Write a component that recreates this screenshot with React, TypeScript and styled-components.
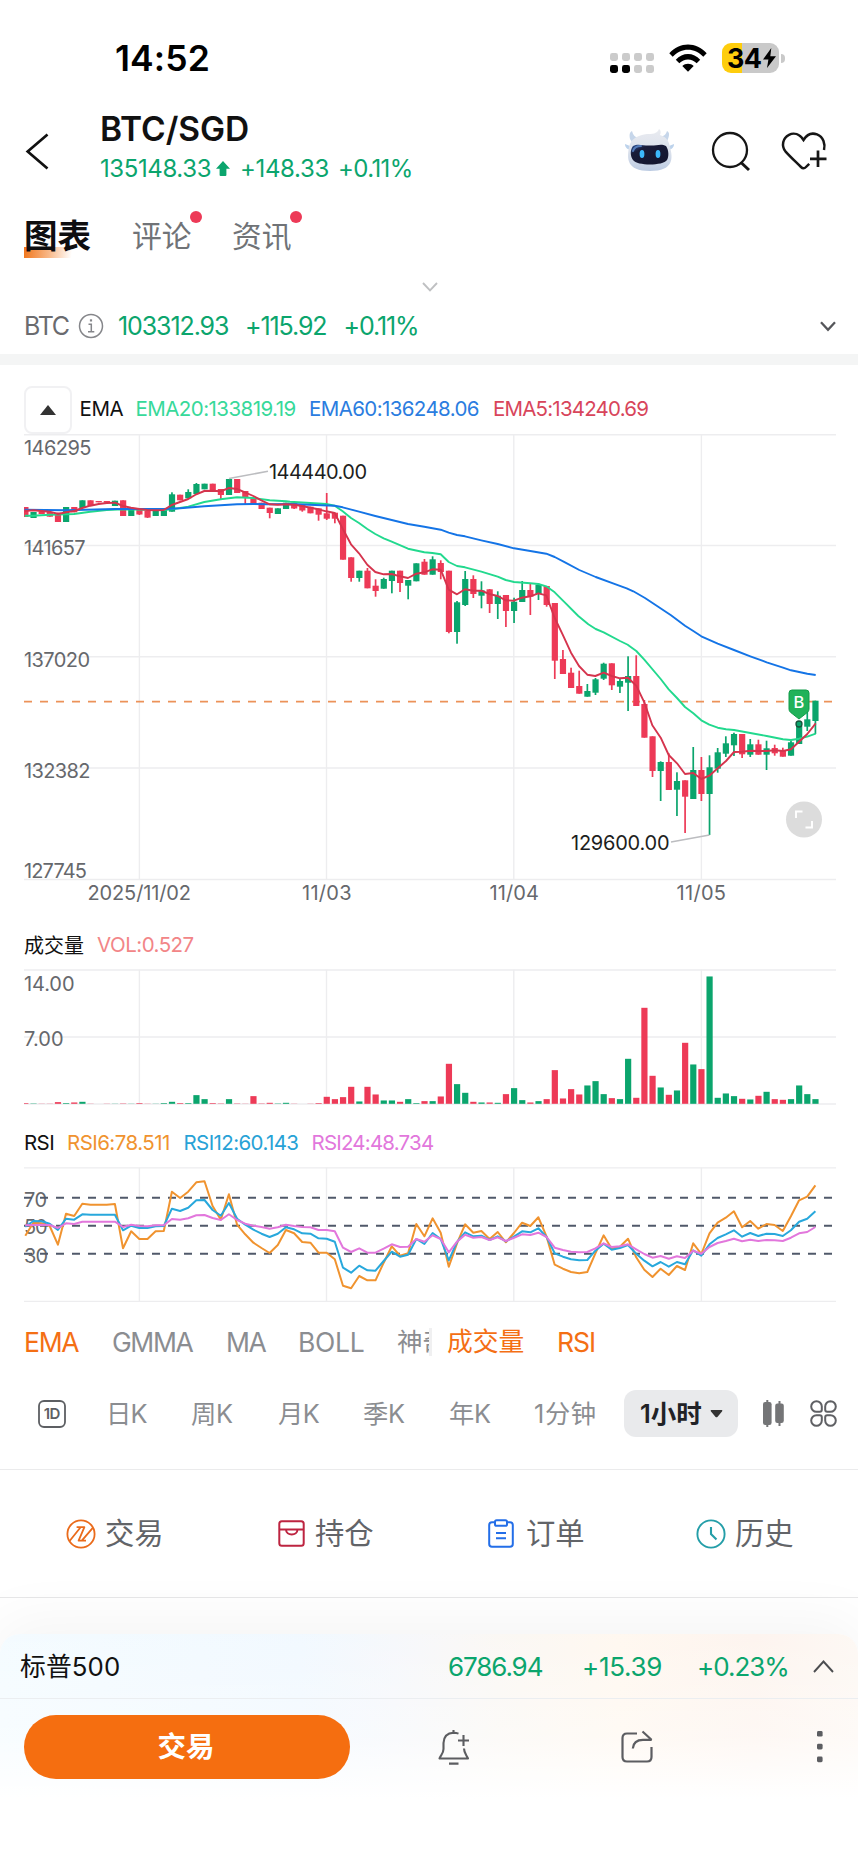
import React from "react";
import styled, { createGlobalStyle, css } from "styled-components";

const GREEN = "#0ba56d";
const RED = "#ed3a57";
const ORANGE = "#f46f14";
const GRID = "#ededef";

const GlobalStyle = createGlobalStyle`
  * { box-sizing: border-box; }
  body {
    margin: 0;
    background: #fff;
    font-family: Inter, "Noto Sans CJK SC", sans-serif;
    font-feature-settings: "calt" 0;
  }
`;

const Screen = styled.main`
  width: 858px;
  height: 1863px;
  display: flex;
  flex-direction: column;
  overflow: hidden;
  background: #fff;
  color: #111;
`;

type LabelProps = {
  $size: number;
  $color?: string;
  $weight?: number;
  $track?: number;
  $width?: number;
  $gap?: number;
};

const Label = styled.span<LabelProps>`
  flex: none;
  display: block;
  line-height: 1;
  white-space: nowrap;
  font-size: ${(p) => p.$size}px;
  color: ${(p) => p.$color ?? "#111"};
  font-weight: ${(p) => p.$weight ?? 400};
  letter-spacing: ${(p) => p.$track ?? 0}px;
  margin-left: ${(p) => p.$gap ?? 0}px;
  ${(p) => p.$width && css`width: ${p.$width}px;`}
`;

const Drawing = styled.svg<{ $gap?: number; $drop?: number }>`
  flex: none;
  display: block;
  overflow: visible;
  margin-left: ${(p) => p.$gap ?? 0}px;
  margin-top: ${(p) => p.$drop ?? 0}px;
`;

/* ---------- Status bar ---------- */

const StatusBar = styled.header`
  height: 100px;
  padding: 18px 0 0 115px;
  display: flex;
  align-items: center;
  flex: none;
`;

const Battery = styled.div`
  width: 57px;
  height: 30px;
  margin: -2px 0 0 15px;
  border-radius: 9px;
  display: flex;
  align-items: center;
  padding-left: 5px;
  background: linear-gradient(90deg, #fecd0d 20px, #c9c9c9 20px);
`;

const BatteryCap = styled.div`
  width: 4px;
  height: 9px;
  margin: -2px 0 0 2px;
  border-radius: 0 4px 4px 0;
  background: #c9c9c9;
`;

function Status() {
  return (
    <StatusBar>
      <Label $size={35.5} $weight={600} $color="#000" $width={495} $track={0.1}>14:52</Label>
      <Drawing $drop={7} width="44" height="20" viewBox="0 0 44 20">
        {[0, 12, 24, 36].map((x, i) => (
          <g key={x}>
            <rect x={x} y="0" width="8" height="8" rx="2.4" fill="#cbcbcb" />
            <rect x={x} y="12" width="8" height="8" rx="2.4" fill={i < 2 ? "#000" : "#cbcbcb"} />
          </g>
        ))}
      </Drawing>
      <Drawing $gap={15} $drop={-3} width="38" height="28" viewBox="0 0 38 28" fill="#000">
        <path d="M0.3 9.3C10.5-2.3 27.5-2.3 37.7 9.3L34.3 12.8C25.8 3.4 12.2 3.4 3.7 12.8Z" />
        <path d="M6.8 15.8C13.5 8.2 24.5 8.2 31.2 15.8L27.7 19.3C22.8 14.1 15.2 14.1 10.3 19.3Z" />
        <path d="M13.3 22.1C16.4 18.9 21.6 18.9 24.7 22.1L19 27.8Z" />
      </Drawing>
      <Battery>
        <Label $size={27} $weight={700} $color="#000" $track={-0.6}>34</Label>
        <Drawing width="15" height="22" viewBox="0 0 15 22" fill="#000">
          <path d="M9.3 1L1 12.4H6.4L5 21L14 9.2H8.3Z" />
        </Drawing>
      </Battery>
      <BatteryCap />
    </StatusBar>
  );
}

/* ---------- Title ---------- */

const TitleBar = styled.section`
  height: 96px;
  padding-left: 24px;
  display: flex;
  align-items: center;
  flex: none;
`;

const Quote = styled.div`
  width: 525px;
  margin-left: 50px;
  display: flex;
  flex-direction: column;
  gap: 10px;
  padding-bottom: 2px;
`;

const Line = styled.div`
  display: flex;
  align-items: center;
`;

function Robot() {
  return (
    <Drawing $drop={5} width="50" height="44" viewBox="0 0 50 44">
      <defs>
        <linearGradient id="shell" x1="0" y1="0" x2="0" y2="1">
          <stop offset="0" stopColor="#e9ebf0" />
          <stop offset="0.55" stopColor="#dbe1ec" />
          <stop offset="1" stopColor="#bccbe2" />
        </linearGradient>
        <linearGradient id="visor" x1="0" y1="0" x2="1" y2="1">
          <stop offset="0" stopColor="#315ba4" />
          <stop offset="0.25" stopColor="#191c39" />
          <stop offset="1" stopColor="#12152d" />
        </linearGradient>
      </defs>
      <path d="M5 10C4 5 5 3 7 2C8 6 10 8 13 9L8 15Z" fill="#c6d6ea" />
      <path d="M43 10C45 5 44 3 42 2C41 6 38 7 36 8L41 15Z" fill="#c6d6ea" />
      <path d="M5 17L0 15C0 19 3 21 6 20ZM44 17L49 15C49 19 46 21 43 20Z" fill="#bdd3ec" />
      <path d="M4 18C6 9 14 6 22 5C27 5 32 5 34 0C36 1 36 4 35 6C42 8 44 13 45 18C48 29 49 42 25 42C1 42 2 29 4 18Z" fill="url(#shell)" />
      <path d="M8 17C13 14 19 17 25 16.5C31 17 36 14 41 17C44 21 44 28 42 31C38 37 12 37 8 31C5 27 5 21 8 17Z" fill="url(#visor)" />
      <path d="M8 22C9 18.5 12 17 16 17" fill="none" stroke="#557dbb" strokeWidth="2" strokeLinecap="round" />
      <ellipse cx="17" cy="25" rx="2.4" ry="4" fill="#3cb9fb" />
      <ellipse cx="33" cy="25" rx="2.4" ry="4" fill="#3cb9fb" />
    </Drawing>
  );
}

function Title() {
  return (
    <TitleBar>
      <Drawing $drop={5} width="26" height="38" viewBox="0 0 26 38" fill="none" stroke="#111" strokeWidth="2.7">
        <path d="M23.5 2.5L3.7 19.5L23.5 36.5" />
      </Drawing>
      <Quote>
        <Label $size={33.5} $weight={600} $track={-0.1}>BTC/SGD</Label>
        <Line>
          <Label $size={24} $color={GREEN} $track={-0.4} $width={116}>135148.33</Label>
          <Drawing width="14" height="15" viewBox="0 0 14 15" fill={GREEN}>
            <path d="M7 0L14 7.8H10.4V14Q10.4 15 9.4 15H4.6Q3.6 15 3.6 14V7.8H0Z" />
          </Drawing>
          <Label $size={24} $color={GREEN} $track={-0.35} $gap={10} $width={98}>+148.33</Label>
          <Label $size={24} $color={GREEN} $track={-0.6}>+0.11%</Label>
        </Line>
      </Quote>
      <Robot />
      <Drawing $gap={36} $drop={6} width="40" height="40" viewBox="0 0 40 40" fill="none" stroke="#161616" strokeWidth="2.3">
        <circle cx="19" cy="19" r="17" />
        <path d="M30 31.5L38 39" strokeWidth="3" />
      </Drawing>
      <Drawing $gap={30} $drop={6} width="46" height="40" viewBox="0 0 46 40" fill="none" stroke="#161616" strokeWidth="2.5">
        <path d="M43 19C44.5 13 42.5 6 36 3.4C31 1.6 26 3.2 22.5 9C18.5 3 13 1.4 8 3.8C1.5 7 .3 15.2 4.4 20.3C9 25.5 14.5 30.5 20 36Q22.5 38.6 25 36L28.2 32.8" />
        <path d="M37 19.5V36M29 27.8H45.5" strokeWidth="2.7" />
      </Drawing>
    </TitleBar>
  );
}

/* ---------- Page tabs ---------- */

const PageTabs = styled.nav`
  height: 74px;
  padding: 6px 0 0 24px;
  display: flex;
  align-items: center;
  flex: none;
`;

const PageTab = styled.div<{ $width: number; $active?: boolean }>`
  position: relative;
  width: ${(p) => p.$width}px;
  margin-right: 41px;
  font-size: ${(p) => (p.$active ? 33.5 : 29.8)}px;
  font-weight: ${(p) => (p.$active ? 700 : 400)};
  color: ${(p) => (p.$active ? "#0e0e10" : "#707377")};
  line-height: 44px;
  white-space: nowrap;
  ${(p) =>
    p.$active &&
    css`
      background: linear-gradient(95deg, #f0761c 0%, #f8b888 45%, #fff 85%) 0 33px / 56px 11px no-repeat;
    `}
`;

const Dot = styled.i`
  position: absolute;
  right: -11px;
  top: -3px;
  width: 12px;
  height: 12px;
  border-radius: 50%;
  background: ${RED};
`;

const Handle = styled.div`
  height: 28px;
  padding: 6px 0 0 1px;
  display: flex;
  justify-content: center;
  align-items: center;
  flex: none;
`;

const Underlying = styled.section`
  height: 67px;
  padding: 0 22px 0 24px;
  border-bottom: 11px solid #f4f5f5;
  display: flex;
  align-items: center;
  flex: none;
`;

const Push = styled.div`
  flex: 1;
`;

/* ---------- Charts ---------- */

const Legend = styled.div<{ $height: number; $top: number }>`
  height: ${(p) => p.$height}px;
  padding: ${(p) => p.$top}px 0 0 24px;
  display: flex;
  align-items: center;
  flex: none;
`;

const Collapse = styled.button`
  width: 48px;
  height: 48px;
  padding: 0;
  border: 2px solid #f1f1f3;
  border-radius: 8px;
  background: #fff;
  display: grid;
  place-items: center;
`;

const Plot = styled.svg`
  display: block;
  flex: none;
  font-family: Inter, sans-serif;
  font-size: 20px;
`;

const STEP = 8.145;
const barX = (i: number) => 25.3 + i * STEP;

type Candle = [up: 0 | 1, high: number, top: number, bottom: number, low: number];

const candles: Candle[] = [
  [0, 507, 507, 517, 517], [1, 512, 512, 518, 518], [0, 511.3, 511.3, 514, 514], [0, 512, 512, 516.7, 516.7],
  [0, 512.7, 512.7, 522, 522], [1, 507, 507, 522, 522], [0, 507, 507, 512.3, 512.3], [1, 500.3, 500.3, 508, 508],
  [0, 500.3, 500.3, 506, 506], [0, 501, 501, 502.3, 502.3], [0, 501, 501, 502.7, 502.7], [1, 500.7, 500.7, 506, 506],
  [0, 500.3, 500.3, 516, 516], [1, 509, 509, 516, 516], [0, 509, 509, 514.5, 515], [0, 511, 511, 517.6, 518],
  [1, 511, 511, 516, 516], [1, 510, 510, 516, 516], [1, 492.3, 494.3, 511.7, 511.7], [0, 494.7, 494.7, 500.3, 500.3],
  [1, 489.3, 492, 498.3, 498.3], [1, 483, 484, 494, 494], [1, 483.7, 483.7, 489.3, 489.3], [0, 483.7, 483.7, 491.3, 491.3],
  [0, 489, 489, 495, 499], [1, 479, 479, 495, 495], [0, 479, 479, 493, 493], [0, 491, 491, 497.7, 504],
  [0, 498.3, 498.3, 504, 504], [0, 502.7, 502.7, 509, 509], [0, 507.7, 507.7, 513, 518.3], [1, 508.3, 508.3, 514, 514],
  [1, 502.7, 502.7, 509, 509], [0, 502.7, 502.7, 508.5, 509], [0, 504.7, 504.7, 510.5, 511.7], [0, 506.7, 506.7, 513.3, 513.3],
  [0, 508.3, 508.3, 514.7, 520.7], [0, 493, 513.3, 518.7, 520], [0, 512.7, 512.7, 518.7, 523.3], [0, 515.7, 515.7, 559.7, 559.7],
  [0, 557.3, 557.3, 578, 581.7], [1, 570.7, 570.7, 578, 581.7], [0, 568, 570.7, 588.3, 588.3], [0, 579.3, 585.7, 591, 596.7],
  [1, 577.7, 579, 588.7, 588.7], [1, 570.7, 570.7, 581, 593.3], [0, 570.7, 570.7, 583, 592], [1, 580, 580, 585.7, 599.3],
  [1, 563.3, 563.3, 581.3, 581.3], [0, 559, 561.7, 574.7, 574.7], [1, 556.3, 559.3, 574.7, 574.7], [0, 560.3, 563, 572, 579.3],
  [0, 570.7, 570.7, 632, 633.3], [1, 601, 602.3, 632, 643.7], [1, 571, 579, 605, 606], [0, 575.3, 579, 594, 598],
  [1, 581.3, 590.3, 595.7, 608.3], [0, 589, 589.3, 604, 613], [1, 591.3, 595.7, 604, 619], [0, 595, 595, 611, 627],
  [1, 597.7, 601.7, 611, 623], [1, 581, 590, 602, 602], [0, 584, 590, 596.7, 615], [1, 583.3, 584.7, 594, 600],
  [0, 586, 586, 605, 606.7], [0, 603, 603, 660.7, 679], [0, 650, 659, 674, 674], [0, 667.7, 672.7, 688, 688],
  [0, 670.7, 686, 693.7, 693.7], [1, 684, 691, 696.7, 696.7], [1, 678, 679.3, 692.7, 695], [1, 662.7, 663.7, 678.7, 680],
  [0, 663.3, 663.3, 685.3, 690], [1, 678.3, 681, 686.7, 693], [1, 656.3, 676, 682.7, 711], [0, 655.3, 676, 706, 706],
  [0, 700, 704, 737.7, 737.7], [0, 736.3, 736.3, 771, 777], [1, 761.3, 762, 771, 801], [0, 753.3, 762, 790, 790],
  [1, 772.3, 781, 789.7, 816], [0, 780.3, 780.3, 796.7, 833], [1, 747, 770, 799, 799], [0, 757, 770, 794, 801],
  [1, 755.3, 767.3, 794, 835], [1, 748, 752.3, 768.7, 772.7], [1, 736.3, 743.3, 753.7, 757], [1, 732.7, 734, 745.3, 756],
  [0, 734, 734, 754.3, 758], [1, 739, 744.3, 754.7, 757], [0, 739.7, 744.3, 754.7, 754.7], [1, 740.7, 748.3, 754.7, 770],
  [0, 744.7, 748, 753.3, 755.7], [0, 747.7, 751, 756.7, 756.7], [1, 741, 742.3, 755.7, 755.7], [1, 726, 726, 744, 744],
  [1, 710, 719.3, 726.7, 731], [1, 700.7, 700.7, 721, 734],
];

/* Each segment is an origin followed by points in thirds of a pixel. */
type Segment = [ox: number, oy: number, pts: string];

const trace = (segments: Segment[]) =>
  segments
    .flatMap(([ox, oy, pts]) =>
      pts.split(" ").map((pair) => {
        const [x, y] = pair.split(",").map(Number);
        return `${(ox + x / 3).toFixed(1)},${(oy + y / 3).toFixed(1)}`;
      })
    )
    .join(" ");

const ema5 = trace([
  [0, 430, "74,243 100,241 149,245 174,252 198,247 222,243 247,234 271,227 296,222 320,219 345,218 369,228 393,233 418,237 442,240 467,241 491,240 515,225 540,216 565,207 589,193 613,183 638,182 662,184 687,174 711,177 735,187 760,198 784,211 809,223 833,224 858,223"],
  [290, 500, "12,14 37,18 61,23 85,28 109,34 134,39 158,86 183,133 207,160 232,194 256,216 281,223 305,222 330,229 354,234 379,221 403,217 427,208 452,209 476,269 501,283 525,268 550,272 574,272 598,282 623,288 647,301 672,302 696,293 721,289 745,280 769,286 794,354 818,404 843,458 867,498"],
  [560, 630, "82,134 106,138 131,128 155,138 180,145 204,143 229,167 253,217 277,286 302,323 326,375 351,400 375,432 400,429 424,447 448,437 473,415 498,393 522,366 546,365 571,362 595,363 620,363 644,361 669,363 693,358 717,335 742,312 767,280"],
]);

const ema20 = trace([
  [0, 430, "74,257 100,257 149,254 222,252 271,245 320,240 369,238 491,240 515,238 565,230 613,216 662,208 711,202 760,204 809,211 858,214"],
  [290, 500, "0,5 61,9 109,12 134,17 158,34 183,54 207,69 232,87 256,102 281,115 305,125 354,146 403,157 427,159 452,163 476,186 501,198 525,202 574,215 623,230 647,240 672,246 721,250 745,252 769,259 794,277 818,301"],
  [565, 540, "0,188 40,228 70,253 92,267 116,277 165,303 190,315"],
  [560, 630, "204,45 229,63 253,89 302,147 326,178 351,204 375,231 400,250 424,271 448,284 473,293 498,298 522,300 571,309 620,318 669,328 693,330 717,326 742,320 767,311"],
]);

const ema60 = trace([
  [0, 430, "74,239 198,241 345,237 491,237 540,235 613,229 711,223 760,222 800,223"],
  [290, 500, "0,12 134,17 158,22 207,35 256,48 305,60 354,72 403,80 452,89 476,98 501,105 525,109 574,121 623,132 672,145 721,153 769,161 794,171"],
  [565, 540, "0,67 43,90 92,111 146,131 185,145 205,154 240,174 275,197 318,226 360,257 385,273"],
  [560, 630, "424,19 473,41 522,60 571,79 620,97 669,113 693,121 742,131 767,135"],
]);

const volumes = [
  2, 1, 0.5, 0.5, 5, 2, 4, 6, 0.5, 0, 0.5, 0.5, 1, 0.5, 2, 0.5, 0.5, 2, 6, 2, 2, 26, 14, 2, 1, 14, 1, 0.5, 23, 1, 3, 1, 3, 0.5, 0, 0.5, 2,
  21, 14, 20, 51, 7, 51, 28, 10, 10, 6, 14, 2, 8, 8, 22, 120, 59, 33, 6, 4, 4, 3, 29, 47, 11, 4, 8, 14, 101, 16, 44, 28,
  55, 68, 29, 17, 14, 135, 18, 288, 84, 49, 27, 40, 183, 118, 104, 382, 18, 31, 23, 15, 13, 24, 36, 14, 12, 14, 55, 29, 14,
];

const rsi6 = [
  947, 908, 910, 918, 974, 881, 888, 851, 854, 854, 854, 852, 985, 934, 957, 957, 934, 933, 815, 834, 815, 787, 784, 858, 899,
  823, 914, 943, 968, 984, 999, 975, 930, 940, 966, 968, 998, 998, 1018, 1097, 1105, 1068, 1081, 1081, 1028, 979, 1007, 1000,
  912, 949, 895, 938, 1040, 970, 913, 938, 933, 957, 936, 967, 939, 908, 918, 892, 950, 1034, 1046, 1056, 1060, 1056, 1000,
  946, 986, 980, 956, 1012, 1049, 1071, 1046, 1065, 1038, 1050, 970, 1002, 940, 908, 893, 874, 922, 903, 926, 912, 915, 933,
  889, 841, 830, 796,
];
const rsi12 = [
  920, 903, 904, 911, 930, 896, 899, 883, 884, 884, 884, 884, 931, 917, 924, 924, 919, 918, 866, 873, 863, 841, 840, 870, 887,
  849, 896, 914, 929, 941, 951, 941, 922, 928, 940, 941, 955, 956, 965, 1043, 1058, 1037, 1051, 1052, 1023, 995, 1010, 1004,
  957, 972, 939, 957, 1021, 966, 937, 949, 947, 960, 949, 964, 950, 934, 937, 925, 951, 1000, 1010, 1018, 1021, 1020, 992,
  971, 989, 984, 975, 1001, 1022, 1039, 1026, 1040, 1026, 1033, 991, 1007, 973, 954, 943, 931, 950, 939, 948, 941, 942, 948,
  931, 905, 896, 874,
];
const rsi24 = [
  916, 915, 914, 915, 924, 910, 912, 905, 905, 905, 905, 905, 921, 914, 918, 919, 916, 916, 897, 899, 895, 886, 885, 894, 900,
  883, 900, 911, 917, 921, 926, 922, 914, 918, 921, 922, 930, 930, 934, 983, 996, 985, 998, 998, 986, 973, 981, 980, 957, 965,
  946, 957, 997, 965, 944, 953, 951, 960, 952, 963, 953, 943, 945, 938, 951, 983, 990, 995, 997, 996, 985, 970, 981, 979, 973,
  988, 1002, 1013, 1008, 1016, 1009, 1014, 992, 1001, 981, 969, 963, 956, 964, 959, 963, 960, 961, 963, 953, 940, 936, 921,
];
const rsiLine = (values: number[]) => values.map((v, i) => `${barX(i).toFixed(1)},${(920 + v / 3).toFixed(1)}`).join(" ");

function Grid({ rows, top, bottom }: { rows: number[]; top: number; bottom: number }) {
  return (
    <g stroke={GRID} strokeWidth="1.4">
      {rows.map((y) => <path key={y} d={`M24 ${y}H836`} />)}
      {[139.4, 326.5, 513.8, 701.4].map((x) => <path key={x} d={`M${x} ${top}V${bottom}`} />)}
    </g>
  );
}

type Tick = [text: string, x: number, baseline: number, length: number];

function Ticks({ items, color = "#66686c" }: { items: Tick[]; color?: string }) {
  return (
    <g fill={color}>
      {items.map(([text, x, y, length]) => (
        <text key={text} x={x} y={y} textLength={length}>{text}</text>
      ))}
    </g>
  );
}

function PriceChart() {
  return (
    <Plot width="858" height="476" viewBox="0 434 858 476">
      <defs>
        <clipPath id="area"><rect x="24" y="434" width="812" height="450" /></clipPath>
      </defs>
      <Grid rows={[434.7, 545.5, 656.7, 768, 879.5]} top={434} bottom={880} />
      <Ticks
        items={[
          ["146295", 24, 455, 67.5], ["141657", 24, 555.3, 61.5], ["137020", 24, 667, 66], ["132382", 24, 778, 66.5], ["127745", 24, 878.3, 63],
          ["2025/11/02", 87.5, 900.2, 103.5], ["11/03", 302, 900.2, 49.5], ["11/04", 489.5, 900.2, 49.5], ["11/05", 676.5, 900.2, 49.5],
        ]}
      />
      <path d="M24 701.7H836" stroke="#ec9259" strokeWidth="1.8" strokeDasharray="8 8" />
      <g clipPath="url(#area)">
        {candles.map(([up, high, top, bottom, low], i) => (
          <g key={i} fill={up ? GREEN : RED}>
            <rect x={barX(i) - 3} y={top} width="6.2" height={bottom - top} />
            <rect x={barX(i) - 0.8} y={high} width="1.7" height={low - high} />
          </g>
        ))}
        <g fill="none" strokeWidth="1.9" strokeLinejoin="round">
          <polyline points={ema20} stroke="#22d98e" />
          <polyline points={ema60} stroke="#1474e6" />
          <polyline points={ema5} stroke="#d5344d" />
        </g>
      </g>
      <path d="M229 478.5L268 471.3M671 842L709.5 835" stroke="#bcbdc0" strokeWidth="1.6" />
      <Ticks color="#1d1e21" items={[["144440.00", 269, 479.3, 98], ["129600.00", 571, 850, 98.5]]} />
      <circle cx="799" cy="724" r="3" fill={GREEN} stroke="#14543a" strokeWidth="1.3" />
      <path d="M792 690H806Q809 690 809 693V709Q809 711 807.5 712.3L799 719L790.5 712.3Q789 711 789 709V693Q789 690 792 690Z" fill="#21b25a" stroke="#119c48" strokeWidth="1" />
      <text x="799" y="708" fontSize="16.5" fontWeight="500" fill="#fff" textAnchor="middle">B</text>
      <circle cx="804" cy="819.5" r="18" fill="#dcdcdc" />
      <path d="M796 818V811.5H802.5M805.5 827.5H812V821" fill="none" stroke="#fff" strokeWidth="1.9" />
    </Plot>
  );
}

function VolumeChart() {
  return (
    <Plot width="858" height="137" viewBox="0 969 858 137">
      <Grid rows={[970, 1037, 1104]} top={969.7} bottom={1104} />
      <Ticks items={[["14.00", 24, 991, 50.5], ["7.00", 24, 1046, 39.5]]} />
      {volumes.map((v, i) => (
        <rect key={i} x={Math.max(24, barX(i) - 3)} y={1103.8 - v / 3} width={i ? 6.2 : 4.4} height={v / 3} fill={candles[i][0] ? GREEN : RED} />
      ))}
    </Plot>
  );
}

function RsiChart() {
  return (
    <Plot width="858" height="136" viewBox="0 1167 858 136">
      <Grid rows={[1167.9, 1301.4]} top={1167.7} bottom={1301} />
      <Ticks items={[["70", 24, 1206.7, 23], ["50", 24, 1234, 23.5], ["30", 24, 1262.5, 24]]} />
      <path d="M24 1197.7H836M24 1225.7H836M24 1253.7H836" stroke="#50596a" strokeWidth="1.9" strokeDasharray="8 8" />
      <g fill="none" strokeWidth="2" strokeLinejoin="round">
        <polyline points={rsiLine(rsi6)} stroke="#f0932f" />
        <polyline points={rsiLine(rsi12)} stroke="#28a8dc" />
        <polyline points={rsiLine(rsi24)} stroke="#e277dc" />
      </g>
    </Plot>
  );
}

/* ---------- Indicator and period pickers ---------- */

const Indicators = styled.nav`
  height: 69px;
  padding: 9px 0 0 24px;
  display: flex;
  align-items: center;
  flex: none;
`;

const Clipped = styled.div`
  width: 35px;
  height: 28px;
  margin-left: 32px;
  overflow: hidden;
  display: flex;
  align-items: center;
  border-right: 3px solid #f0f0f1;
`;

const Periods = styled.nav`
  height: 98px;
  padding: 0 0 14px 38px;
  border-bottom: 1px solid #ebebec;
  display: flex;
  align-items: center;
  flex: none;
`;

const ActivePeriod = styled.div`
  width: 114px;
  height: 47px;
  margin-left: 24px;
  padding-left: 16px;
  border-radius: 12px;
  background: #e9eaec;
  display: flex;
  align-items: center;
`;

const GREY = "#8b8d91";

function Pickers() {
  return (
    <>
      <Indicators>
        <Label $size={26.5} $color={ORANGE} $track={-1.3} $width={88}>EMA</Label>
        <Label $size={26.5} $color={GREY} $track={-1.4} $width={114}>GMMA</Label>
        <Label $size={26.5} $color={GREY} $track={-1.5} $width={72}>MA</Label>
        <Label $size={26.5} $color={GREY} $track={-0.3} $width={67}>BOLL</Label>
        <Clipped><Label $size={25.5} $color={GREY}>神奇</Label></Clipped>
        <Label $size={25.8} $color={ORANGE} $gap={15} $width={110}>成交量</Label>
        <Label $size={26.5} $color={ORANGE} $track={-1}>RSI</Label>
      </Indicators>
      <Periods>
        <Drawing width="28" height="28" viewBox="0 0 28 28">
          <rect x="1" y="1" width="26" height="26" rx="5" fill="none" stroke="#5d5f63" strokeWidth="1.8" />
          <text x="14" y="19.2" fontFamily="Inter" fontSize="15" fontWeight="600" fill="#5d5f63" textAnchor="middle" textLength="16.5">1D</text>
        </Drawing>
        <Label $size={25.3} $color={GREY} $gap={40} $width={85} $track={-0.8}>日K</Label>
        <Label $size={25.3} $color={GREY} $width={87} $track={-0.4}>周K</Label>
        <Label $size={25.3} $color={GREY} $width={85} $track={-0.6}>月K</Label>
        <Label $size={25.3} $color={GREY} $width={86} $track={-0.4}>季K</Label>
        <Label $size={25.3} $color={GREY} $width={85} $track={-0.4}>年K</Label>
        <Label $size={25.3} $color={GREY} $width={66} $track={0.6}>1分钟</Label>
        <ActivePeriod>
          <Label $size={25.5} $weight={600} $color="#212226" $width={70} $track={0}>1小时</Label>
          <Drawing width="13" height="8" viewBox="0 0 13 8" fill="#333">
            <path d="M1 0H12Q12.8 .6 12 1.5L7.4 6.9Q6.5 7.8 5.6 6.9L1 1.5Q.2 .6 1 0Z" />
          </Drawing>
        </ActivePeriod>
        <Drawing $gap={25} width="21" height="27" viewBox="0 0 21 27" fill="#747577">
          <rect x="0" y="2" width="8.6" height="23" rx="2.2" />
          <rect x="3.3" y="0" width="2" height="27" />
          <rect x="12.2" y="3.5" width="8.6" height="19.5" rx="2.2" />
          <rect x="15.5" y="1" width="2" height="25" />
        </Drawing>
        <Drawing $gap={26} width="27" height="27" viewBox="0 0 27 27" fill="none" stroke="#5f6064" strokeWidth="2">
          <path d="M6.5 1.2A5.3 5.3 0 0 1 11.8 6.5V9.8Q11.8 11.8 9.8 11.8H6.5A5.3 5.3 0 0 1 6.5 1.2ZM20.5 1.2A5.3 5.3 0 0 1 20.5 11.8H17.2Q15.2 11.8 15.2 9.8V6.5A5.3 5.3 0 0 1 20.5 1.2ZM6.5 15.2H9.8Q11.8 15.2 11.8 17.2V20.5A5.3 5.3 0 1 1 6.5 15.2ZM17.2 15.2H20.5A5.3 5.3 0 1 1 15.2 20.5V17.2Q15.2 15.2 17.2 15.2Z" />
        </Drawing>
      </Periods>
    </>
  );
}

/* ---------- Shortcuts ---------- */

const Shortcuts = styled.section`
  height: 128px;
  padding: 1px 0 0 66px;
  border-bottom: 1px solid #e7e7e8;
  display: flex;
  align-items: center;
  flex: none;
`;

const Shortcut = styled.div<{ $width: number; $space: number }>`
  width: ${(p) => p.$width}px;
  display: flex;
  align-items: center;
  gap: ${(p) => p.$space}px;
  font-size: 29.3px;
  line-height: 1;
  color: #626468;
`;

function Actions() {
  return (
    <Shortcuts>
      <Shortcut $width={211} $space={9}>
        <Drawing width="30" height="30" viewBox="0 0 30 30" fill="none" stroke="#ea6b1b" strokeWidth="1.8">
          <circle cx="15" cy="15" r="13.6" />
          <path d="M3.6 22L14.6 8.2M10.6 8.2H18.4L12.6 21.6H20M15.8 21.6L26.8 8.8" strokeLinejoin="round" />
        </Drawing>
        交易
      </Shortcut>
      <Shortcut $width={211} $space={10}>
        <Drawing $gap={1} width="27" height="27" viewBox="0 0 27 27" fill="none" stroke="#bd2440" strokeWidth="2">
          <rect x="1.3" y="1.3" width="24.4" height="24.4" rx="2.5" />
          <path d="M1.3 9.5H25.7M8 9.5C8 16 19.5 16 19.5 9.5" />
        </Drawing>
        持仓
      </Shortcut>
      <Shortcut $width={208} $space={12}>
        <Drawing width="26" height="29" viewBox="0 0 26 29" fill="none" stroke="#236ee8" strokeWidth="2">
          <path d="M7 3.2H4Q1.2 3.2 1.2 6V25Q1.2 27.8 4 27.8H22Q24.8 27.8 24.8 25V6Q24.8 3.2 22 3.2H19" />
          <rect x="7" y="1.2" width="12" height="5.6" rx="1.6" />
          <path d="M8 14H18M8 19.3H18" />
        </Drawing>
        订单
      </Shortcut>
      <Shortcut $width={120} $space={9}>
        <Drawing width="30" height="30" viewBox="0 0 30 30" fill="none" stroke="#249ea8" strokeWidth="1.9">
          <circle cx="15" cy="15" r="13.6" />
          <path d="M15 8V15L20.5 20.5" strokeWidth="2.1" />
        </Drawing>
        历史
      </Shortcut>
    </Shortcuts>
  );
}

/* ---------- Bottom dock ---------- */

const Dock = styled.footer`
  height: 229px;
  margin-top: 36px;
  flex: none;
  border-radius: 20px 20px 0 0;
  box-shadow: 0 -8px 60px 6px rgba(0, 0, 0, 0.045);
  background:
    linear-gradient(180deg, rgba(255, 255, 255, 0.1) 0%, rgba(255, 255, 255, 0.4) 45%, #fff 72%),
    linear-gradient(90deg, #f3fbff 0%, #f0f8ff 35%, #f5f7fb 46%, #faf7f3 58%, #fff7ee 72%, #fdf3ed 88%, #fdf7f2 100%);
`;

const IndexRow = styled.div`
  height: 65px;
  padding: 1px 0 0 20px;
  border-bottom: 1px solid #ebeef1;
  display: flex;
  align-items: center;
`;

const DockRow = styled.div`
  height: 95px;
  padding-left: 24px;
  display: flex;
  align-items: center;
`;

const TradeButton = styled.button`
  width: 326px;
  height: 64px;
  padding: 2px 2px 0 0;
  border: 0;
  border-radius: 32px;
  background: #f56e10;
  color: #fff;
  font: 700 28.5px/1 Inter, "Noto Sans CJK SC", sans-serif;
`;

function BottomDock() {
  return (
    <Dock>
      <IndexRow>
        <Label $size={25.8} $width={428} $track={0.1}>标普500</Label>
        <Label $size={26} $color={GREEN} $width={134} $track={-1.1}>6786.94</Label>
        <Label $size={26} $color={GREEN} $width={115} $track={-0.3}>+15.39</Label>
        <Label $size={26} $color={GREEN} $width={116} $track={-1}>+0.23%</Label>
        <Drawing width="21" height="13" viewBox="0 0 21 13" fill="none" stroke="#4c4d50" strokeWidth="1.9">
          <path d="M1 12L10.5 1.5L20 12" />
        </Drawing>
      </IndexRow>
      <DockRow>
        <TradeButton>交易</TradeButton>
        <Drawing $gap={88} width="32" height="36" viewBox="0 0 32 36" fill="none" stroke="#5c5d61" strokeWidth="2.1">
          <path d="M20.5 4.6Q18.5 3.8 15.5 3.8Q6 4.2 5.5 14V20C5.5 24 3 26 1.5 29.5H30C28.5 26 26 24 26 19.5" strokeLinejoin="round" />
          <path d="M15.5 1V4M11 34.6H20.5M25.5 6V17M20 11.5H31" />
        </Drawing>
        <Drawing $gap={151} width="33" height="33" viewBox="0 0 33 33" fill="none" stroke="#5c5d61" strokeWidth="2.2">
          <path d="M16 3.5H6Q1.5 3.5 1.5 8V27Q1.5 31.5 6 31.5H26Q30.5 31.5 30.5 27V17" />
          <path d="M21.5 1.5L30.5 9.8H22Q12.5 9.8 11.8 18.5" strokeLinejoin="bevel" />
        </Drawing>
        <Drawing $gap={163} width="6" height="32" viewBox="0 0 6 32" fill="#5c5d61">
          <rect width="5.6" height="5.6" rx="1.4" y="0" />
          <rect width="5.6" height="5.6" rx="1.4" y="12.8" />
          <rect width="5.6" height="5.6" rx="1.4" y="25.6" />
        </Drawing>
      </DockRow>
    </Dock>
  );
}

export default function App() {
  return (
    <Screen>
      <GlobalStyle />
      <Status />
      <Title />
      <PageTabs>
        <PageTab $width={67} $active>图表</PageTab>
        <PageTab $width={59}>评论<Dot /></PageTab>
        <PageTab $width={59}>资讯<Dot /></PageTab>
      </PageTabs>
      <Handle>
        <Drawing width="16" height="10" viewBox="0 0 16 10" fill="none" stroke="#bfc0c2" strokeWidth="1.9">
          <path d="M1 1L8 8.3L15 1" />
        </Drawing>
      </Handle>
      <Underlying>
        <Label $size={25} $color="#6a6b6f" $track={-1.3} $width={54}>BTC</Label>
        <Drawing width="26" height="26" viewBox="0 0 26 26" fill="none" stroke="#85868a" strokeWidth="1.5">
          <circle cx="13" cy="13" r="11.5" />
          <path d="M13 6.3V8.5" strokeWidth="2.2" />
          <path d="M10.5 11.2H13.3V18.8M10 18.8H16.3" />
        </Drawing>
        <Label $size={25} $color={GREEN} $track={-1.1} $gap={14} $width={127}>103312.93</Label>
        <Label $size={25} $color={GREEN} $track={-1.1} $width={98.5}>+115.92</Label>
        <Label $size={25} $color={GREEN} $track={-1.1}>+0.11%</Label>
        <Push />
        <Drawing width="16" height="11" viewBox="0 0 16 11" fill="none" stroke="#55565a" strokeWidth="2.3">
          <path d="M1 1.3L8 8.8L15 1.3" />
        </Drawing>
      </Underlying>
      <Legend $height={69} $top={20}>
        <Collapse aria-label="EMA">
          <Drawing width="16" height="10" viewBox="0 0 16 10" fill="#333"><path d="M8 0L16 10H0Z" /></Drawing>
        </Collapse>
        <Label $size={20.5} $gap={7.5} $width={56} $track={-0.4}>EMA</Label>
        <Label $size={20.5} $color="#37d99a" $width={173.5} $track={-0.55}>EMA20:133819.19</Label>
        <Label $size={20.5} $color="#2b7de0" $width={184} $track={-0.6}>EMA60:136248.06</Label>
        <Label $size={20.5} $color="#d8455b" $track={-0.8}>EMA5:134240.69</Label>
      </Legend>
      <PriceChart />
      <Legend $height={59} $top={12}>
        <Label $size={20} $width={73}>成交量</Label>
        <Label $size={20.5} $color="#f28587" $track={-0.5}>VOL:0.527</Label>
      </Legend>
      <VolumeChart />
      <Legend $height={61} $top={13}>
        <Label $size={20.5} $width={43} $track={-0.6}>RSI</Label>
        <Label $size={20.5} $color="#f0932f" $width={116.5} $track={-0.55}>RSI6:78.511</Label>
        <Label $size={20.5} $color="#28a2d6" $width={128} $track={-0.6}>RSI12:60.143</Label>
        <Label $size={20.5} $color="#e277dc" $track={-0.8}>RSI24:48.734</Label>
      </Legend>
      <RsiChart />
      <Pickers />
      <Actions />
      <BottomDock />
    </Screen>
  );
}
